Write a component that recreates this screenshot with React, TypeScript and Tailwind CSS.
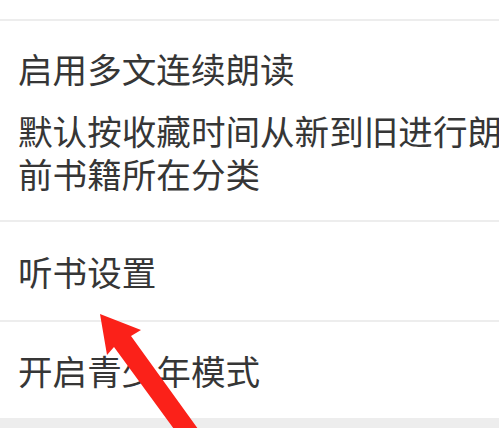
import React from "react";

export default function App() {
  return (
    <div
      className="relative w-[499px] h-[428px] overflow-hidden bg-white text-[#363636]"
      style={{ fontFamily: '"Noto Sans CJK SC", "Noto Sans", sans-serif' }}
    >
      <div className="h-[21px] border-b-2 border-[#ededed]" />
      <div className="flex flex-col pl-[18px] pt-[26px] pb-[25px] border-b-2 border-[#ededed]">
        <div className="text-[34.6px] leading-[43px] whitespace-nowrap">启用多文连续朗读</div>
        <div className="mt-[19px] text-[34.6px] leading-[43px] whitespace-nowrap">
          <div>默认按收藏时间从新到旧进行朗</div>
          <div>前书籍所在分类</div>
        </div>
      </div>
      <div className="h-[100px] flex items-center pl-[18px] border-b-2 border-[#ededed]">
        <span className="text-[34.6px] leading-[43px] whitespace-nowrap">听书设置</span>
      </div>
      <div className="h-[96px] flex items-center pl-[18px]">
        <span className="text-[34.6px] leading-[43px] whitespace-nowrap">开启青少年模式</span>
      </div>
      <div className="h-[20px] bg-[#ededed]" />
      <svg
        className="absolute left-0 top-0 pointer-events-none"
        width="499"
        height="428"
        viewBox="0 0 499 428"
      >
        <polygon
          points="100,314 141,330 131,336 206,440 182,440 114,347 107,355"
          fill="#fb2119"
        />
      </svg>
    </div>
  );
}
